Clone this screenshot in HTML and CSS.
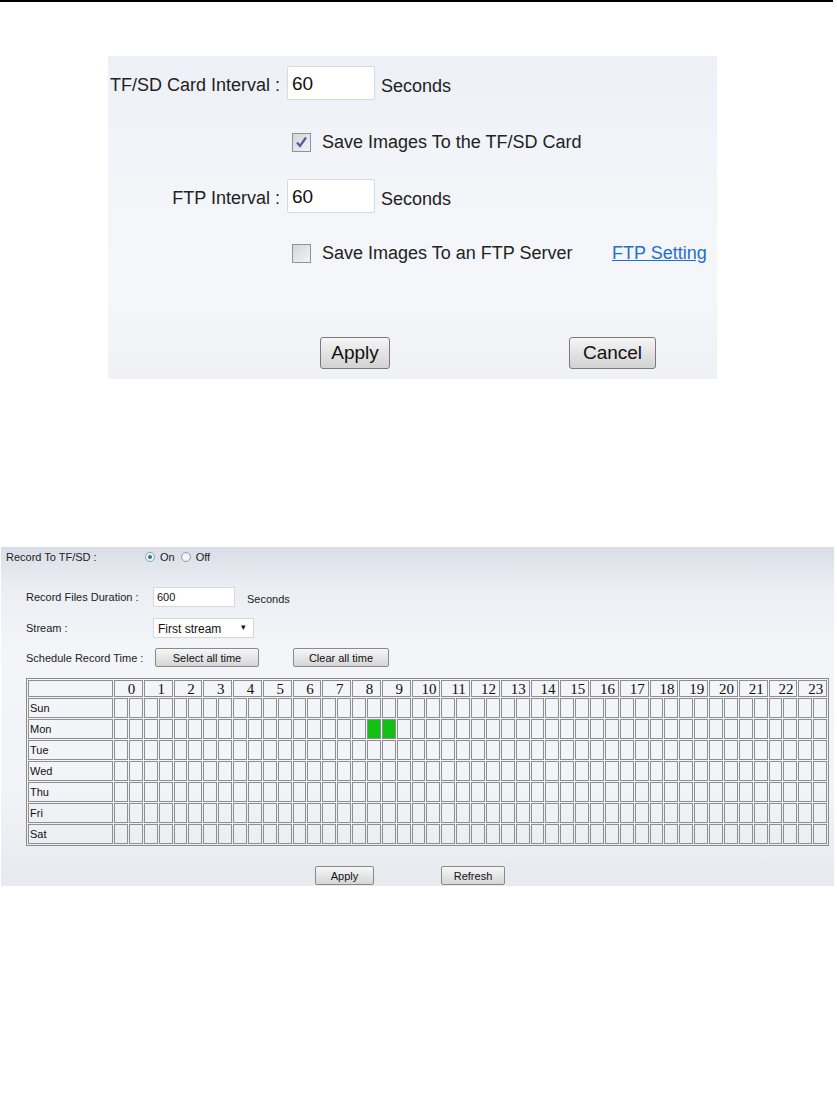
FILE: index.html
```html
<!DOCTYPE html>
<html lang="en">

<head>
    <meta charset="UTF-8">
    <meta name="viewport" content="width=device-width, initial-scale=1.0">
    <title>Record Settings</title>
    <link rel="stylesheet" href="styles.css">
</head>

<body>
    <div class="page-rule"></div>

    <!-- Snapshot settings -->
    <div class="snap-panel">
        <div class="snap-row first">
            <span class="snap-label">TF/SD Card Interval :</span>
            <span class="snap-input">60</span>
            <span class="snap-unit">Seconds</span>
        </div>
        <div class="snap-row check-row">
            <span class="check">
                <svg width="13" height="13" viewBox="0 0 13 13"><path d="M2 6.5 L5 10 L11 1.5" fill="none" stroke="#4d5f9a" stroke-width="2.2"/></svg>
            </span>
            <span class="check-text">Save Images To the TF/SD Card</span>
        </div>
        <div class="snap-row ftp">
            <span class="snap-label">FTP Interval :</span>
            <span class="snap-input">60</span>
            <span class="snap-unit">Seconds</span>
        </div>
        <div class="snap-row check-row second">
            <span class="check"></span>
            <span class="check-text">Save Images To an FTP Server</span>
            <a class="ftp-link" href="#">FTP Setting</a>
        </div>
        <div class="snap-buttons">
            <button class="big-btn apply">Apply</button>
            <button class="big-btn cancel">Cancel</button>
        </div>
    </div>

    <!-- Record settings -->
    <div class="rec-panel">
        <div class="rec-top">
            <span class="rec-top-label">Record To TF/SD :</span>
            <span class="radio on"></span><span class="radio-text">On</span>
            <span class="radio"></span><span class="radio-text">Off</span>
        </div>

        <div class="rec-form">
            <div class="rec-row duration">
                <span class="rec-label">Record Files Duration :</span>
                <span class="rec-input">600</span>
                <span class="rec-unit">Seconds</span>
            </div>
            <div class="rec-row stream">
                <span class="rec-label">Stream :</span>
                <span class="rec-select">First stream<span class="arrow">&#9662;</span></span>
            </div>
            <div class="rec-row schedule">
                <span class="rec-label">Schedule Record Time :</span>
                <button class="small-btn select-all">Select all time</button>
                <button class="small-btn clear-all">Clear all time</button>
            </div>

            <table class="sched">
                <tr class="head">
                    <td class="day"></td>
                    <td colspan="2">0</td><td colspan="2">1</td><td colspan="2">2</td><td colspan="2">3</td>
                    <td colspan="2">4</td><td colspan="2">5</td><td colspan="2">6</td><td colspan="2">7</td>
                    <td colspan="2">8</td><td colspan="2">9</td><td colspan="2">10</td><td colspan="2">11</td>
                    <td colspan="2">12</td><td colspan="2">13</td><td colspan="2">14</td><td colspan="2">15</td>
                    <td colspan="2">16</td><td colspan="2">17</td><td colspan="2">18</td><td colspan="2">19</td>
                    <td colspan="2">20</td><td colspan="2">21</td><td colspan="2">22</td><td colspan="2">23</td>
                </tr>
                <tr>
                    <td class="day">Sun</td>
                    <td></td><td></td><td></td><td></td><td></td><td></td><td></td><td></td><td></td><td></td><td></td><td></td>
                    <td></td><td></td><td></td><td></td><td></td><td></td><td></td><td></td><td></td><td></td><td></td><td></td>
                    <td></td><td></td><td></td><td></td><td></td><td></td><td></td><td></td><td></td><td></td><td></td><td></td>
                    <td></td><td></td><td></td><td></td><td></td><td></td><td></td><td></td><td></td><td></td><td></td><td></td>
                </tr>
                <tr>
                    <td class="day">Mon</td>
                    <td></td><td></td><td></td><td></td><td></td><td></td><td></td><td></td><td></td><td></td><td></td><td></td>
                    <td></td><td></td><td></td><td></td><td></td><td class="on"></td><td class="on"></td><td></td><td></td><td></td><td></td><td></td>
                    <td></td><td></td><td></td><td></td><td></td><td></td><td></td><td></td><td></td><td></td><td></td><td></td>
                    <td></td><td></td><td></td><td></td><td></td><td></td><td></td><td></td><td></td><td></td><td></td><td></td>
                </tr>
                <tr>
                    <td class="day">Tue</td>
                    <td></td><td></td><td></td><td></td><td></td><td></td><td></td><td></td><td></td><td></td><td></td><td></td>
                    <td></td><td></td><td></td><td></td><td></td><td></td><td></td><td></td><td></td><td></td><td></td><td></td>
                    <td></td><td></td><td></td><td></td><td></td><td></td><td></td><td></td><td></td><td></td><td></td><td></td>
                    <td></td><td></td><td></td><td></td><td></td><td></td><td></td><td></td><td></td><td></td><td></td><td></td>
                </tr>
                <tr>
                    <td class="day">Wed</td>
                    <td></td><td></td><td></td><td></td><td></td><td></td><td></td><td></td><td></td><td></td><td></td><td></td>
                    <td></td><td></td><td></td><td></td><td></td><td></td><td></td><td></td><td></td><td></td><td></td><td></td>
                    <td></td><td></td><td></td><td></td><td></td><td></td><td></td><td></td><td></td><td></td><td></td><td></td>
                    <td></td><td></td><td></td><td></td><td></td><td></td><td></td><td></td><td></td><td></td><td></td><td></td>
                </tr>
                <tr>
                    <td class="day">Thu</td>
                    <td></td><td></td><td></td><td></td><td></td><td></td><td></td><td></td><td></td><td></td><td></td><td></td>
                    <td></td><td></td><td></td><td></td><td></td><td></td><td></td><td></td><td></td><td></td><td></td><td></td>
                    <td></td><td></td><td></td><td></td><td></td><td></td><td></td><td></td><td></td><td></td><td></td><td></td>
                    <td></td><td></td><td></td><td></td><td></td><td></td><td></td><td></td><td></td><td></td><td></td><td></td>
                </tr>
                <tr>
                    <td class="day">Fri</td>
                    <td></td><td></td><td></td><td></td><td></td><td></td><td></td><td></td><td></td><td></td><td></td><td></td>
                    <td></td><td></td><td></td><td></td><td></td><td></td><td></td><td></td><td></td><td></td><td></td><td></td>
                    <td></td><td></td><td></td><td></td><td></td><td></td><td></td><td></td><td></td><td></td><td></td><td></td>
                    <td></td><td></td><td></td><td></td><td></td><td></td><td></td><td></td><td></td><td></td><td></td><td></td>
                </tr>
                <tr>
                    <td class="day">Sat</td>
                    <td></td><td></td><td></td><td></td><td></td><td></td><td></td><td></td><td></td><td></td><td></td><td></td>
                    <td></td><td></td><td></td><td></td><td></td><td></td><td></td><td></td><td></td><td></td><td></td><td></td>
                    <td></td><td></td><td></td><td></td><td></td><td></td><td></td><td></td><td></td><td></td><td></td><td></td>
                    <td></td><td></td><td></td><td></td><td></td><td></td><td></td><td></td><td></td><td></td><td></td><td></td>
                </tr>
            </table>

            <div class="rec-buttons">
                <button class="small-btn apply">Apply</button>
                <button class="small-btn refresh">Refresh</button>
            </div>
        </div>
    </div>
</body>

</html>
```

FILE: styles.css
```css
body {
    background-color: white;
    color: #222;
    font-family: "Liberation Sans", Arial, sans-serif;
    margin: 0;
    padding: 0;
}

.page-rule {
    height: 2px;
    margin-right: 4px;
    background-color: black;
}

/* snapshot panel */
.snap-panel {
    margin: 54px 0 0 108px;
    width: 609px;
    height: 323px;
    box-sizing: border-box;
    padding-top: 10px;
    background: linear-gradient(to bottom, #edf0f6 0%, #f3f5f9 40%, #f5f6f9 75%, #eff1f5 100%);
    font-size: 18px;
}

.snap-row {
    display: flex;
    align-items: center;
    height: 34px;
}

.snap-row.check-row {
    margin-top: 25px;
}

.snap-row.ftp {
    margin-top: 20px;
}

.snap-row.second {
    margin-top: 23px;
}

.snap-label {
    width: 172px;
    margin: 4px 7px 0 0;
    text-align: right;
    white-space: nowrap;
}

.snap-input {
    width: 88px;
    height: 34px;
    box-sizing: border-box;
    padding: 6px 0 0 4px;
    background-color: white;
    border: 1px solid #d6d9de;
    border-radius: 2px;
    font-size: 19px;
    color: #111;
}

.snap-unit {
    margin: 6px 0 0 6px;
}

.check {
    width: 19px;
    height: 19px;
    box-sizing: border-box;
    margin-left: 184px;
    border: 1px solid #8e9299;
    background: linear-gradient(to bottom right, #d2d4d8, #f4f4f6);
    display: flex;
    align-items: center;
    justify-content: center;
}

.check-text {
    margin: 1px 0 0 11px;
    width: 290px;
}

.ftp-link {
    margin-top: 1px;
    color: #1d6fd0;
    text-decoration: underline;
}

.snap-buttons {
    display: flex;
    margin-top: 67px;
}

.big-btn {
    height: 32px;
    font-family: "Liberation Sans", Arial, sans-serif;
    font-size: 19px;
    color: #111;
    padding: 0;
    border: 1px solid #7b7b7b;
    border-radius: 3px;
    background: linear-gradient(to bottom, #f6f6f6, #e3e3e3 50%, #d3d3d3);
}

.big-btn.apply {
    margin-left: 212px;
    width: 70px;
}

.big-btn.cancel {
    margin-left: 179px;
    width: 87px;
}

/* record panel */
.rec-panel {
    margin: 168px 0 0 1px;
    width: 833px;
    height: 339px;
    box-sizing: border-box;
    padding-top: 2px;
    background: linear-gradient(to bottom, #d9dde7 0%, #ebeef3 12%, #f3f5f8 30%, #f2f4f7 70%, #e6e9ee 100%);
    font-size: 11px;
}

.rec-top {
    display: flex;
    align-items: center;
    height: 16px;
    padding-left: 5px;
}

.rec-top-label {
    width: 139px;
}

.radio {
    width: 10px;
    height: 10px;
    box-sizing: border-box;
    border: 1px solid #9aa0a8;
    border-radius: 50%;
    background: radial-gradient(circle, #ffffff, #e4e6ea);
    display: flex;
    align-items: center;
    justify-content: center;
}

.radio.on::after {
    content: "";
    width: 4px;
    height: 4px;
    border-radius: 50%;
    background-color: #1e7a9a;
}

.radio-text {
    margin: 0 6px 0 5px;
}

.rec-form {
    padding-left: 25px;
}

.rec-row {
    display: flex;
    align-items: center;
    height: 20px;
}

.rec-row.duration {
    margin-top: 22px;
}

.rec-row.stream {
    margin-top: 11px;
}

.rec-row.schedule {
    margin-top: 10px;
    height: 19px;
}

.rec-label {
    width: 127px;
}

.rec-input {
    width: 82px;
    height: 20px;
    box-sizing: border-box;
    padding: 3px 0 0 3px;
    background-color: white;
    border: 1px solid #d5d8dd;
    color: #111;
}

.rec-unit {
    margin: 4px 0 0 12px;
}

.rec-select {
    width: 101px;
    height: 20px;
    box-sizing: border-box;
    padding: 3px 0 0 4px;
    background-color: white;
    border: 1px solid #d5d8dd;
    font-size: 12px;
    color: #111;
    display: flex;
    justify-content: space-between;
}

.arrow {
    font-size: 9px;
    margin-right: 7px;
}

.small-btn {
    height: 19px;
    padding: 0;
    font-family: "Liberation Sans", Arial, sans-serif;
    font-size: 11px;
    color: #111;
    border: 1px solid #8a8a8a;
    border-radius: 2px;
    background: linear-gradient(to bottom, #f7f7f7, #e6e6e6 50%, #d6d6d6);
}

.small-btn.select-all {
    margin-left: 2px;
    width: 104px;
}

.small-btn.clear-all {
    margin-left: 34px;
    width: 96px;
}

/* schedule grid */
.sched {
    margin-top: 11px;
    width: 803px;
    table-layout: fixed;
    border-collapse: separate;
    border-spacing: 1px;
    border: 1px solid #8a8a8a;
}

.sched td {
    height: 20px;
    box-sizing: border-box;
    border: 1px solid #8f8f8f;
    padding: 0;
    line-height: 14px;
}

.sched td.day {
    width: 85px;
    padding-left: 1px;
    font-size: 11px;
    color: #111;
}

.sched .head td {
    height: 17px;
    text-align: center;
    padding-left: 6px;
    font-family: "Liberation Serif", "Times New Roman", serif;
    font-size: 15px;
    color: #111;
}

.sched .head td.day {
    padding-left: 0;
}

.sched td.on {
    background-color: #12c013;
}

.rec-buttons {
    display: flex;
    margin-top: 20px;
}

.small-btn.apply {
    margin-left: 289px;
    width: 59px;
}

.small-btn.refresh {
    margin-left: 67px;
    width: 64px;
}
```
